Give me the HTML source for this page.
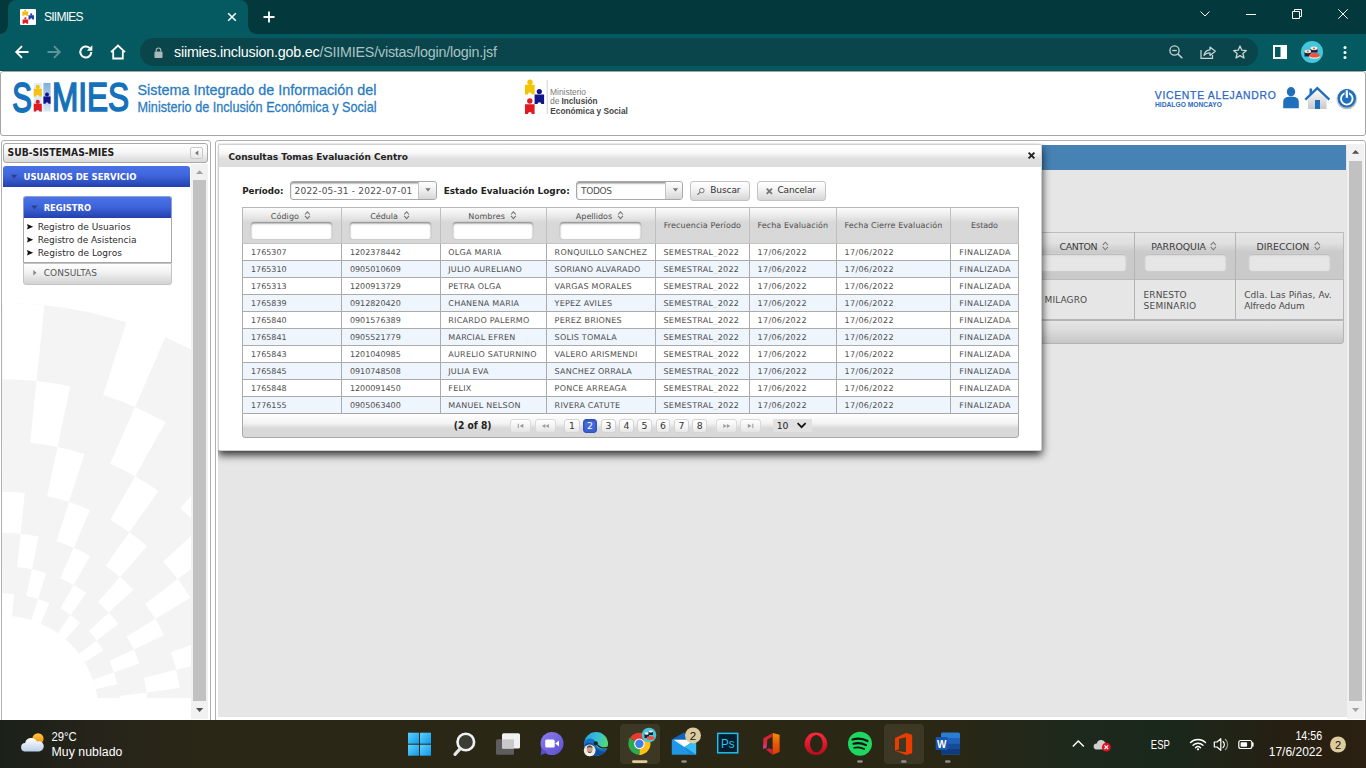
<!DOCTYPE html>
<html lang="es">
<head>
<meta charset="utf-8">
<title>SIIMIES</title>
<style>
*{box-sizing:border-box;margin:0;padding:0}
html,body{width:1366px;height:768px;overflow:hidden;background:#fff}
body{position:relative;font-family:"DejaVu Sans","Liberation Sans",sans-serif;font-size:8px;color:#4f4f4f}
.abs{position:absolute}
svg{display:block;position:absolute;overflow:visible}
/* ---------- browser chrome ---------- */
#tabbar{left:0;top:0;width:1366px;height:34px;background:#03383d}
#tab{left:8px;top:0;width:240px;height:34px;background:#045a60;border-radius:8px 8px 0 0}
#tab:before,#tab:after{content:"";position:absolute;bottom:0;width:8px;height:8px;background:radial-gradient(circle at 0 0,rgba(0,0,0,0) 7.5px,#045a60 8px)}
#tab:before{left:-8px}
#tab:after{right:-8px;transform:scaleX(-1)}
#toolbar{left:0;top:34px;width:1366px;height:37px;background:#045a60;border-bottom:1px solid #035056}
#omni{left:140px;top:38px;width:1118px;height:28px;border-radius:14px;background:#0a454b}
.ui{font-family:"Liberation Sans",sans-serif;color:#fff}
/* ---------- page ---------- */
#page{left:0;top:71px;width:1366px;height:649px;background:#fff}
#hdr{left:0;top:71px;width:1366px;height:65px;background:#fff;border:1px solid #a6a6a6;border-radius:3px}
/* ---------- taskbar ---------- */
#taskbar{left:0;top:720px;width:1366px;height:48px;background:linear-gradient(90deg,#1b2119 0%,#26231a 7%,#2b2716 15%,#2a2715 70%,#1c291c 79%,#1a281b 86%,#261f12 94%,#2b2012 100%)}

.sel{border:1px solid #a8a8a8;border-radius:3px;background:#fff;box-shadow:inset 0 1.500px 1.500px #959595}
.trg{border-left:1px solid #c4c4c4;border-radius:0 2px 2px 0;background:linear-gradient(#ffffff 0%,#f0f0f0 45%,#d6d6d6 100%)}
.btn{border:1px solid #c4c4c4;border-radius:3px;background:linear-gradient(#ffffff 0%,#f4f4f4 40%,#d6d6d6 100%)}
.fin{width:80.600px;height:17px;border-radius:3px;background:#fff;box-shadow:inset 0 1.5px 2px #8a8a8a,0 0 0 0.600px #c6c6c6}
.bin{height:17px;border-radius:3px;background:#e6e6e6;box-shadow:inset 0 1px 1.5px #b4b4b4,0 0 0 0.500px #cfcfcf}
.pb{border:1px solid #d4d4d4;border-radius:3px;background:linear-gradient(#ffffff 0%,#f7f7f7 50%,#e6e6e6 100%)}
.pbd{border:1px solid #dadada;border-radius:3px;background:linear-gradient(#ffffff 0%,#f3f3f3 50%,#e3e3e3 100%)}
.pba{border:1px solid #2f52b8;border-radius:3px;background:linear-gradient(#4a72e6 0%,#3a5fd2 100%);box-shadow:inset 0 1px 2px rgba(0,0,40,.35)}
</style>
</head>
<body>
<div class="abs" id="tabbar"></div>
<div class="abs" id="tab"></div>
<div class="abs" id="toolbar"></div>
<div class="abs" id="omni"></div>
<!-- favicon -->
<div class="abs" style="left:20px;top:9px;width:16px;height:16px;background:#fff;border-radius:1px"></div>
<svg style="left:20px;top:9px" width="16" height="16" viewBox="0 0 16 16">
 <g fill="#f7b916"><circle cx="5.300" cy="1.700" r="1.100"/><path d="M2.300 2.600h5.900v4.100h-1.900a1.050 1.050 0 0 0-2.100 0h-1.900z"/></g>
 <g fill="#1f3fa6"><circle cx="11.200" cy="5.300" r="1.100"/><path d="M8.500 6.200h5.500v4.200h-1.700a1.050 1.050 0 0 0-2.100 0h-1.700z"/></g>
 <g fill="#e21b23"><circle cx="5.400" cy="9.400" r="1.100"/><path d="M2.600 10.400h5.600v4.300h-1.750a1.050 1.050 0 0 0-2.100 0h-1.750z"/></g>
</svg>
<div class="abs ui" style="left:44px;top:10px;font-size:12px;line-height:14px;letter-spacing:-0.75px">SIIMIES</div>
<svg style="left:227px;top:12px" width="10" height="10" viewBox="0 0 10 10"><path d="M1.200 1.200L8.800 8.800M8.800 1.200L1.200 8.800" stroke="#fff" stroke-width="1.500" fill="none"/></svg>
<svg style="left:263px;top:11px" width="12" height="12" viewBox="0 0 12 12"><path d="M6 0.500V11.500M0.500 6H11.500" stroke="#fff" stroke-width="1.800" fill="none"/></svg>
<!-- window controls -->
<svg style="left:1200px;top:10px" width="10" height="8" viewBox="0 0 10 8"><path d="M0.500 1.500L5 6L9.500 1.500" stroke="#fff" stroke-width="1" fill="none"/></svg>
<svg style="left:1246px;top:14px" width="10" height="1" viewBox="0 0 10 1"><rect width="10" height="1" fill="#fff"/></svg>
<svg style="left:1292px;top:9px" width="10" height="10" viewBox="0 0 10 10"><path d="M0.500 2.500h7v7h-7zM2.500 2.500V0.500h7v7H7.500" stroke="#fff" stroke-width="1" fill="none"/></svg>
<svg style="left:1338px;top:9px" width="10" height="10" viewBox="0 0 10 10"><path d="M0.300 0.300L9.700 9.700M9.700 0.300L0.300 9.700" stroke="#fff" stroke-width="1" fill="none"/></svg>
<!-- nav buttons -->
<svg style="left:15px;top:45px" width="14" height="14" viewBox="0 0 14 14"><path d="M13.500 7H1.500M7 1.200L1.200 7L7 12.800" stroke="#fff" stroke-width="1.800" fill="none"/></svg>
<svg style="left:47px;top:45px" width="14" height="14" viewBox="0 0 14 14"><path d="M0.500 7H12.500M7 1.200L12.800 7L7 12.800" stroke="#5f9499" stroke-width="1.800" fill="none"/></svg>
<svg style="left:79px;top:45px" width="14" height="14" viewBox="0 0 14 14"><path d="M12.300 7A5.500 5.500 0 1 1 10.600 3" stroke="#fff" stroke-width="2" fill="none"/><path d="M13.300 0.300V5.700H7.900z" fill="#fff"/></svg>
<svg style="left:110px;top:44px" width="16" height="16" viewBox="0 0 16 16"><path d="M1 8.200L8 1.500L15 8.200M3.200 7V14.500H12.800V7" stroke="#fff" stroke-width="1.800" fill="none" stroke-linejoin="miter"/></svg>
<!-- lock -->
<svg style="left:153.500px;top:46.500px" width="9" height="11" viewBox="0 0 10 12"><rect x="0.500" y="5" width="9" height="7" rx="1" fill="#a9b8b9"/><path d="M2.500 5V3.500a2.500 2.500 0 0 1 5 0V5" stroke="#a9b8b9" stroke-width="1.300" fill="none"/></svg>
<div class="abs ui" style="left:174px;top:43px;font-size:14.300px;line-height:18px;white-space:nowrap;letter-spacing:-0.2px">siimies.inclusion.gob.ec<span style="color:#a9c3c5">/SIIMIES/vistas/login/login.jsf</span></div>
<!-- right omnibox icons -->
<svg style="left:1169px;top:45px" width="14" height="14" viewBox="0 0 14 14"><circle cx="5.500" cy="5.500" r="4.600" stroke="#c9d6d7" stroke-width="1.300" fill="none"/><path d="M9 9L13.300 13.300" stroke="#c9d6d7" stroke-width="1.600"/><path d="M3.200 5.500H7.800" stroke="#c9d6d7" stroke-width="1.300"/></svg>
<svg style="left:1200px;top:45px" width="16" height="14" viewBox="0 0 16 14"><path d="M1 5V13.400H12.500V10" stroke="#c9d6d7" stroke-width="1.200" fill="none"/><path d="M4 10.500C4.500 6.800 7 5 10 4.800V2L15.300 6.300L10 10.500V7.800C7.500 7.800 5.500 8.500 4 10.500z" stroke="#c9d6d7" stroke-width="1.200" fill="none" stroke-linejoin="round"/></svg>
<svg style="left:1233px;top:45px" width="14" height="14" viewBox="0 0 14 14"><path d="M7 1L8.800 5.200L13.400 5.600L9.900 8.600L11 13L7 10.600L3 13L4.100 8.600L0.600 5.600L5.200 5.200z" stroke="#c9d6d7" stroke-width="1.300" fill="none" stroke-linejoin="round"/></svg>
<svg style="left:1273px;top:45px" width="14" height="14" viewBox="0 0 14 14"><rect x="0" y="0" width="14" height="14" fill="#fff"/><rect x="2" y="2" width="5.500" height="10" fill="#045a60"/></svg>
<svg style="left:1301px;top:41px" width="22" height="22" viewBox="0 0 22 22"><circle cx="11" cy="11" r="11" fill="#45c6da"/><ellipse cx="13" cy="7.500" rx="3.500" ry="2" fill="#f4efe6"/><path d="M9.500 7.500v4h7v-4z" fill="#1a1f3a"/><ellipse cx="13" cy="7.500" rx="3.300" ry="1.700" fill="#f4efe6"/><circle cx="13" cy="7.500" r="1" fill="#e8503a"/><path d="M3.500 10.500v5h6.500v-5z" fill="#1a1f3a"/><ellipse cx="6.800" cy="10.500" rx="3.300" ry="1.700" fill="#f4efe6"/><circle cx="6.800" cy="10.500" r="1" fill="#e8503a"/><ellipse cx="13.500" cy="15.500" rx="5.200" ry="2.200" fill="#f4efe6"/><ellipse cx="13.500" cy="14.300" rx="5.200" ry="2.300" fill="#f0523f"/></svg>
<svg style="left:1343px;top:46px" width="4" height="13" viewBox="0 0 4 13"><circle cx="2" cy="1.500" r="1.500" fill="#fff"/><circle cx="2" cy="6.500" r="1.500" fill="#fff"/><circle cx="2" cy="11.500" r="1.500" fill="#fff"/></svg>
<!--CHROME-END-->
<div class="abs" id="page"></div>
<div class="abs" id="hdr"></div>
<!-- SIIMIES logo -->
<svg style="left:0;top:71px" width="400" height="64" viewBox="0 71 400 64" font-family="Liberation Sans, sans-serif">
 <text x="12.2" y="112" font-size="42" fill="#1571ba" stroke="#1571ba" stroke-width="1.8" textLength="19.6" lengthAdjust="spacingAndGlyphs">S</text>
 <text x="34" y="111" font-size="38" fill="#dbe9f6" font-weight="bold" textLength="16" lengthAdjust="spacingAndGlyphs">II</text>
 <defs><linearGradient id="c1" x1="0" y1="0" x2="0" y2="1"><stop offset="0" stop-color="#e4eff9"/><stop offset="1" stop-color="#d3e5f4"/></linearGradient><linearGradient id="c2" x1="0" y1="0" x2="0" y2="1"><stop offset="0" stop-color="#7fb0da"/><stop offset="1" stop-color="#dbe9f6"/></linearGradient></defs>
 <rect x="33.750" y="82.900" width="8.050" height="28.700" fill="url(#c1)"/>
 <rect x="43.400" y="82.900" width="7.200" height="28.700" fill="url(#c2)"/>
 <text x="51.9" y="111" font-size="40" fill="#1571ba" stroke="#1571ba" stroke-width="1.6" textLength="77.2" lengthAdjust="spacingAndGlyphs">MIES</text>
 <g fill="#f5c211"><circle cx="37.75" cy="86.9" r="2.1"/><path d="M33.75 88.7H41.8V96.4H39.45A1.7 1.7 0 0 0 36.05 96.4H33.75z"/></g>
 <g fill="#14148c"><circle cx="47.0" cy="94.4" r="2.0"/><path d="M43.4 96.4H50.6V103.7H48.50A1.5 1.5 0 0 0 45.50 103.7H43.4z"/></g>
 <g fill="#e01b22"><circle cx="37.75" cy="101.9" r="2.1"/><path d="M33.75 103.8H41.8V111.6H39.45A1.7 1.7 0 0 0 36.05 111.6H33.75z"/></g>
 <text x="137.500" y="95" font-size="15.500" fill="#2a7cc0" stroke="#2a7cc0" stroke-width="0.3" textLength="239" lengthAdjust="spacingAndGlyphs">Sistema Integrado de Información del</text>
 <text x="137.500" y="112" font-size="15.500" fill="#2a7cc0" stroke="#2a7cc0" stroke-width="0.3" textLength="239" lengthAdjust="spacingAndGlyphs">Ministerio de Inclusión Económica y Social</text>
</svg>
<!-- Ministerio logo -->
<svg style="left:520px;top:76px" width="120" height="44" viewBox="520 76 120 44" font-family="Liberation Sans, sans-serif">
 <g fill="#f5c400"><circle cx="530" cy="82.300" r="2.700"/><path d="M525 84.800h9.600v9.700h-2.800a1.900 1.900 0 0 0-3.800 0H525z"/></g>
 <g fill="#14148c"><circle cx="539.300" cy="91.500" r="2.600"/><path d="M534.600 94.600h9.500v9.500h-2.800a1.900 1.900 0 0 0-3.800 0h-2.900z"/></g>
 <g fill="#e01b22"><circle cx="529.800" cy="101" r="2.700"/><path d="M525 104.300h9.600v9.700h-2.800a1.900 1.900 0 0 0-3.800 0H525z"/></g>
 <rect x="546.800" y="80" width="0.700" height="34" fill="#bdbdbd"/>
 <text x="550" y="94.700" font-size="9" fill="#7a7a7a" textLength="36" lengthAdjust="spacingAndGlyphs">Ministerio</text>
 <text x="550" y="104" font-size="9" fill="#7a7a7a" textLength="9.500" lengthAdjust="spacingAndGlyphs">de</text>
 <text x="561.500" y="104" font-size="9" fill="#444" font-weight="bold" textLength="36" lengthAdjust="spacingAndGlyphs">Inclusión</text>
 <text x="550.300" y="113.700" font-size="9" fill="#444" font-weight="bold" textLength="77.500" lengthAdjust="spacingAndGlyphs">Económica y Social</text>
</svg>
<!-- user -->
<svg style="left:1140px;top:76px" width="226" height="46" viewBox="1140 76 226 46" font-family="Liberation Sans, sans-serif">
 <text x="1154.800" y="98.700" font-size="10.400" fill="#2b68c0" stroke="#2b68c0" stroke-width="0.250" textLength="121" lengthAdjust="spacing">VICENTE ALEJANDRO</text>
 <text x="1155" y="106.800" font-size="6.500" font-weight="bold" fill="#2b68c0" textLength="67" lengthAdjust="spacingAndGlyphs">HIDALGO MONCAYO</text>
 <!-- person -->
 <g fill="#1f6fbd"><ellipse cx="1291" cy="91.800" rx="4.200" ry="4.700"/><path d="M1283.200 108.300v-6.300c0-3 2.200-5 5-5.200h5.600c2.800 0.200 5 2.200 5 5.200v6.300z"/></g>
 <!-- home -->
 <defs><linearGradient id="hg" x1="0" y1="0" x2="0" y2="1"><stop offset="0" stop-color="#ffffff"/><stop offset="1" stop-color="#c8c8c8"/></linearGradient></defs>
 <path d="M1308 98l9.300-8.500 9.300 8.500v11h-18.600z" fill="url(#hg)"/>
 <rect x="1309.500" y="88.500" width="2.600" height="6" fill="#1f6fbd"/>
 <path d="M1305.300 99.600L1317.300 88.200L1329.400 99.600" stroke="#1f6fbd" stroke-width="2.300" fill="none" stroke-linejoin="miter"/>
 <rect x="1315" y="100" width="5" height="9" fill="#1f6fbd"/>
 <!-- power -->
 <defs><linearGradient id="pg" x1="0" y1="0" x2="0" y2="1"><stop offset="0" stop-color="#f4f4f4"/><stop offset="1" stop-color="#b8b8b8"/></linearGradient></defs>
 <circle cx="1346.800" cy="98.800" r="10.500" fill="url(#pg)"/>
 <circle cx="1346.800" cy="98.300" r="9.300" fill="#1f6fbd"/>
 <circle cx="1346.800" cy="98.800" r="5.800" fill="none" stroke="#fff" stroke-width="1.900"/>
 <rect x="1344.600" y="89.500" width="4.400" height="8.500" fill="#1f6fbd"/>
 <rect x="1345.700" y="90.300" width="2.200" height="7.500" fill="#fff"/>
</svg>
<!--HEADER-END-->
<div class="abs" style="left:1px;top:140px;width:210px;height:600px;border:1px solid #b0b0b0;border-radius:3px;background:#fff"></div>
<svg style="left:2px;top:290px;overflow:hidden" width="189" height="408" viewBox="2 290 189 408">
<g>
<path fill="#f4f4f4" d="M-3.1 615.6L-19.4 303.6A409 409 0 0 1 410.4 733.4L98.4 717.1A96.6 96.6 0 0 0 -3.1 615.6z"/>
<path fill="#fff" d="M2.5 379.2L2.6 303.0A409.0 409.0 0 0 1 44.4 305.2L36.5 381.0A332.8 332.8 0 0 0 2.5 379.2zM103.1 394.9L126.3 322.3A409.0 409.0 0 0 1 165.5 337.1L135.0 406.9A332.8 332.8 0 0 0 103.1 394.9zM194.3 440.4L238.3 378.2A409.0 409.0 0 0 1 271.2 404.1L221.1 461.5A332.8 332.8 0 0 0 194.3 440.4zM267.5 511.3L328.3 465.3A409.0 409.0 0 0 1 351.8 500.0L286.6 539.5A332.8 332.8 0 0 0 267.5 511.3zM315.7 601.0L387.6 575.6A409.0 409.0 0 0 1 399.5 615.8L325.4 633.7A332.8 332.8 0 0 0 315.7 601.0zM334.6 701.1L410.8 698.7A409.0 409.0 0 0 1 410.0 740.5L334.0 735.2A332.8 332.8 0 0 0 334.6 701.1zM30.1 442.7L36.5 381.0A332.8 332.8 0 0 1 70.2 386.3L57.5 447.0A270.8 270.8 0 0 0 30.1 442.7zM110.2 463.8L135.0 406.9A332.8 332.8 0 0 1 165.5 422.2L135.1 476.2A270.8 270.8 0 0 0 110.2 463.8zM180.3 508.2L221.1 461.5A332.8 332.8 0 0 1 245.5 485.2L200.2 527.5A270.8 270.8 0 0 0 180.3 508.2zM233.6 571.6L286.6 539.5A332.8 332.8 0 0 1 302.7 569.5L246.7 596.1A270.8 270.8 0 0 0 233.6 571.6zM265.2 648.3L325.4 633.7A332.8 332.8 0 0 1 331.8 667.2L270.3 675.5A270.8 270.8 0 0 0 265.2 648.3zM-20.2 492.8L-25.3 442.6A270.8 270.8 0 0 1 2.4 441.2L2.3 491.7A220.3 220.3 0 0 0 -20.2 492.8zM47.1 496.3L57.5 447.0A270.8 270.8 0 0 1 84.3 454.0L69.0 502.1A220.3 220.3 0 0 0 47.1 496.3zM110.3 520.1L135.1 476.2A270.8 270.8 0 0 1 158.5 491.0L129.3 532.2A220.3 220.3 0 0 0 110.3 520.1zM163.2 561.8L200.2 527.5A270.8 270.8 0 0 1 218.0 548.7L177.8 579.1A220.3 220.3 0 0 0 163.2 561.8zM201.1 617.7L246.7 596.1A270.8 270.8 0 0 1 257.3 621.7L209.7 638.5A220.3 220.3 0 0 0 201.1 617.7zM220.3 682.3L270.3 675.5A270.8 270.8 0 0 1 272.6 703.2L222.2 704.8A220.3 220.3 0 0 0 220.3 682.3zM2.3 532.7L2.3 491.7A220.3 220.3 0 0 1 24.8 492.9L20.6 533.7A179.3 179.3 0 0 0 2.3 532.7zM56.5 541.2L69.0 502.1A220.3 220.3 0 0 1 90.1 510.0L73.7 547.7A179.3 179.3 0 0 0 56.5 541.2zM105.6 565.7L129.3 532.2A220.3 220.3 0 0 1 147.0 546.1L120.0 577.1A179.3 179.3 0 0 0 105.6 565.7zM145.0 603.9L177.8 579.1A220.3 220.3 0 0 1 190.4 597.8L155.3 619.1A179.3 179.3 0 0 0 145.0 603.9zM171.0 652.2L209.7 638.5A220.3 220.3 0 0 1 216.1 660.2L176.2 669.8A179.3 179.3 0 0 0 171.0 652.2zM181.2 706.1L222.2 704.8A220.3 220.3 0 0 1 221.8 727.4L180.8 724.5A179.3 179.3 0 0 0 181.2 706.1zM17.1 566.9L20.6 533.7A179.3 179.3 0 0 1 38.7 536.5L31.9 569.2A145.9 145.9 0 0 0 17.1 566.9zM60.3 578.3L73.7 547.7A179.3 179.3 0 0 1 90.1 555.9L73.7 585.0A145.9 145.9 0 0 0 60.3 578.3zM98.0 602.2L120.0 577.1A179.3 179.3 0 0 1 133.2 589.8L108.8 612.6A145.9 145.9 0 0 0 98.0 602.2zM126.7 636.4L155.3 619.1A179.3 179.3 0 0 1 164.0 635.2L133.8 649.5A145.9 145.9 0 0 0 126.7 636.4zM143.8 677.7L176.2 669.8A179.3 179.3 0 0 1 179.6 687.9L146.5 692.4A145.9 145.9 0 0 0 143.8 677.7zM-10.0 593.9L-12.7 566.9A145.9 145.9 0 0 1 2.2 566.1L2.2 593.3A118.7 118.7 0 0 0 -10.0 593.9zM26.3 595.8L31.9 569.2A145.9 145.9 0 0 1 46.3 573.0L38.1 598.9A118.7 118.7 0 0 0 26.3 595.8zM60.3 608.6L73.7 585.0A145.9 145.9 0 0 1 86.3 593.0L70.6 615.1A118.7 118.7 0 0 0 60.3 608.6zM88.9 631.1L108.8 612.6A145.9 145.9 0 0 1 118.4 624.0L96.7 640.4A118.7 118.7 0 0 0 88.9 631.1zM109.3 661.2L133.8 649.5A145.9 145.9 0 0 1 139.5 663.4L113.9 672.4A118.7 118.7 0 0 0 109.3 661.2zM119.6 696.0L146.5 692.4A145.9 145.9 0 0 1 147.8 707.2L120.6 708.1A118.7 118.7 0 0 0 119.6 696.0zM2.1 615.4L2.2 593.3A118.7 118.7 0 0 1 14.3 593.9L12.0 615.9A96.6 96.6 0 0 0 2.1 615.4zM31.3 620.0L38.1 598.9A118.7 118.7 0 0 1 49.4 603.2L40.6 623.5A96.6 96.6 0 0 0 31.3 620.0zM57.8 633.2L70.6 615.1A118.7 118.7 0 0 1 80.1 622.7L65.6 639.3A96.6 96.6 0 0 0 57.8 633.2zM79.0 653.8L96.7 640.4A118.7 118.7 0 0 1 103.5 650.5L84.6 661.9A96.6 96.6 0 0 0 79.0 653.8zM93.0 679.8L113.9 672.4A118.7 118.7 0 0 1 117.4 684.1L95.9 689.3A96.6 96.6 0 0 0 93.0 679.8zM98.5 708.8L120.6 708.1A118.7 118.7 0 0 1 120.4 720.3L98.3 718.7A96.6 96.6 0 0 0 98.5 708.8z"/>
</g></svg>
<div class="abs" style="left:3px;top:143px;width:205px;height:20px;border:1px solid #a8a8a8;border-radius:3px;background:linear-gradient(#ffffff 0%,#f6f6f6 45%,#d9d9d9 100%)"></div>
<div class="abs" style="left:190px;top:147px;width:13px;height:12px;border:1px solid #c8c8c8;border-radius:2px;background:linear-gradient(#ffffff,#e6e6e6)"></div>
<div class="abs" style="left:3px;top:166px;width:187px;height:21px;border-radius:3px 3px 0 0;background:linear-gradient(#4a72e6 0%,#3f65dc 45%,#2341ad 100%)"></div>
<div class="abs" style="left:191px;top:163.500px;width:17px;height:555.500px;background:#f1f1f1"></div>
<div class="abs" style="left:193px;top:180px;width:13px;height:521px;background:#c1c1c1"></div>
<div class="abs" style="left:23px;top:196px;width:148.700px;height:22px;border:1px solid #8f9fd0;border-bottom:none;border-radius:3px 3px 0 0;background:linear-gradient(#4a72e6 0%,#3f65dc 45%,#2341ad 100%)"></div>
<div class="abs" style="left:23px;top:218px;width:148.700px;height:45px;border:1px solid #a8a8a8;border-top:none;background:#fff"></div>
<div class="abs" style="left:23px;top:262.500px;width:148.700px;height:22px;border:1px solid #c4c4c4;border-radius:0 0 3px 3px;background:linear-gradient(#ffffff 0%,#f2f2f2 40%,#d2d2d2 100%)"></div>
<svg style="left:0;top:136px" width="214" height="584" viewBox="0 136 214 584" font-family="DejaVu Sans, sans-serif">
<text x="7.5" y="155.9" font-size="9.6" fill="#222" font-weight="bold" textLength="106.7" lengthAdjust="spacingAndGlyphs">SUB-SISTEMAS-MIES</text>
<path d="M198.300 150.500v5l-3.300-2.500z" fill="#777"/>
<text x="23.5" y="179.8" font-size="9.5" fill="#fff" font-weight="bold" textLength="113" lengthAdjust="spacingAndGlyphs">USUARIOS DE SERVICIO</text>
<path d="M10.900 174.800h6.400l-3.200 3.800z" fill="#2c3e84"/>
<text x="43.7" y="210.7" font-size="9.5" fill="#fff" font-weight="bold" textLength="47.3" lengthAdjust="spacingAndGlyphs">REGISTRO</text>
<path d="M31.200 205.500h6.400l-3.200 3.800z" fill="#2c3e84"/>
<text x="37.7" y="229.8" font-size="9" fill="#2b2b2b" textLength="92.9" lengthAdjust="spacing">Registro de Usuarios</text>
<path d="M27 224l6.200 2.700-6.200 2.700 0.800-2.700z" fill="#111"/>
<text x="37.7" y="242.85" font-size="9" fill="#2b2b2b" textLength="98.7" lengthAdjust="spacing">Registro de Asistencia</text>
<path d="M27 237.05l6.200 2.700-6.200 2.700 0.800-2.700z" fill="#111"/>
<text x="37.7" y="255.9" font-size="9" fill="#2b2b2b" textLength="84.2" lengthAdjust="spacing">Registro de Logros</text>
<path d="M27 250.1l6.200 2.700-6.200 2.700 0.800-2.700z" fill="#111"/>
<text x="43.7" y="275.7" font-size="9" fill="#555" textLength="53.3" lengthAdjust="spacing">CONSULTAS</text>
<path d="M33.300 270v5.400l3.200-2.700z" fill="#888"/>
<path d="M196 174h7.200l-3.600-3.800z" fill="#a3a3a3"/>
<path d="M196 708h7.200l-3.600 4z" fill="#505050"/>
</svg>

<div class="abs" style="left:215px;top:140px;width:1151px;height:600px;border:1px solid #b0b0b0;border-radius:3px;background:#fff"></div>
<div class="abs" style="left:218px;top:144.500px;width:1129px;height:572.500px;background:#e6e6e6"></div>
<div class="abs" style="left:218px;top:144.800px;width:1128px;height:25px;background:#4682b4"></div>
<div class="abs" style="left:1347px;top:143.500px;width:17px;height:575.500px;background:#f1f1f1"></div>
<div class="abs" style="left:1349px;top:161px;width:13px;height:540px;background:#c1c1c1"></div>
<!-- background datatable -->
<div class="abs" style="left:900px;top:231.500px;width:444px;height:48px;border:1px solid #bcbcbc;background:linear-gradient(#e6e6e6 0%,#e0e0e0 22%,#cbcbcb 40%,#c9c9c9 100%)"></div>
<div class="abs" style="left:1134px;top:232px;width:1px;height:87px;background:#b4b4b4"></div>
<div class="abs" style="left:1235px;top:232px;width:1px;height:87px;background:#b4b4b4"></div>
<div class="abs" style="left:900px;top:279.500px;width:444px;height:40px;border:1px solid #b4b4b4;border-top:none;background:#e6e6e6"></div>
<div class="abs" style="left:1134px;top:232px;width:1px;height:87px;background:#b4b4b4"></div>
<div class="abs" style="left:1235px;top:232px;width:1px;height:87px;background:#b4b4b4"></div>
<div class="abs" style="left:900px;top:320px;width:444px;height:23.500px;border:1px solid #b4b4b4;border-radius:0 0 3px 3px;background:linear-gradient(#e6e6e6 0%,#dcdcdc 40%,#c6c6c6 100%)"></div>
<div class="abs bin" style="left:1040px;top:253.500px;width:86px"></div>
<div class="abs bin" style="left:1145px;top:253.500px;width:81px"></div>
<div class="abs bin" style="left:1249px;top:253.500px;width:81px"></div>
<svg style="left:1040px;top:140px" width="326" height="580" viewBox="1040 140 326 580" font-family="DejaVu Sans, sans-serif">
<text x="1059.6" y="250" font-size="9.4" fill="#3a3a3a" textLength="37.8" lengthAdjust="spacing">CANTON</text>
<text x="1151.3" y="250" font-size="9.4" fill="#3a3a3a" textLength="54.7" lengthAdjust="spacing">PARROQUIA</text>
<text x="1256.5" y="250" font-size="9.4" fill="#3a3a3a" textLength="52.8" lengthAdjust="spacing">DIRECCION</text>
<path d="M1102.7 245.100l2.600-2.900 2.600 2.900M1102.7 246.900l2.600 2.900 2.600-2.900" stroke="#7a7a7a" stroke-width="1.100" fill="none"/>
<path d="M1210.7 245.100l2.600-2.900 2.600 2.900M1210.7 246.900l2.600 2.900 2.600-2.900" stroke="#7a7a7a" stroke-width="1.100" fill="none"/>
<path d="M1314.7 245.100l2.600-2.900 2.600 2.900M1314.7 246.900l2.600 2.900 2.600-2.900" stroke="#7a7a7a" stroke-width="1.100" fill="none"/>
<text x="1044.6" y="302.7" font-size="9" fill="#4a4a4a" textLength="42.5" lengthAdjust="spacing">MILAGRO</text>
<text x="1143.6" y="298" font-size="9" fill="#4a4a4a" textLength="43" lengthAdjust="spacing">ERNESTO</text>
<text x="1143.6" y="308.7" font-size="9" fill="#4a4a4a" textLength="52.5" lengthAdjust="spacing">SEMINARIO</text>
<text x="1244.2" y="298" font-size="9" fill="#4a4a4a" textLength="87.5" lengthAdjust="spacing">Cdla. Las Piñas, Av.</text>
<text x="1244.2" y="308.7" font-size="9" fill="#4a4a4a" textLength="60.5" lengthAdjust="spacing">Alfredo Adum</text>
<path d="M1352 153.800h7.200l-3.600-3.900z" fill="#505050"/>
<path d="M1352 708h7.200l-3.600 4z" fill="#a3a3a3"/>
</svg>

<div class="abs" style="left:218.300px;top:144.300px;width:824.200px;height:307px;background:#fff;border:1px solid #d0d0d0;border-radius:2px;box-shadow:0 4px 8px rgba(0,0,0,.8);clip-path:inset(-1px -20px -20px -0.5px)"></div>
<div class="abs" style="left:219.300px;top:145.300px;width:822.200px;height:21.400px;background:linear-gradient(#ffffff 0%,#f8f8f8 35%,#e0e0e0 62%,#dcdcdc 100%)"></div>
<!-- selects -->
<div class="abs sel" style="left:290.200px;top:181.400px;width:146.400px;height:18.200px"></div>
<div class="abs trg" style="left:417.600px;top:182.400px;width:18px;height:16.200px"></div>
<div class="abs sel" style="left:576.200px;top:181.400px;width:107.300px;height:18.200px"></div>
<div class="abs trg" style="left:664.700px;top:182.400px;width:17.800px;height:16.200px"></div>
<div class="abs btn" style="left:690px;top:181.400px;width:59.800px;height:19.300px"></div>
<div class="abs btn" style="left:757.200px;top:181.400px;width:68.500px;height:19.300px"></div>
<div class="abs" style="left:242px;top:207px;width:777px;height:37px;background:linear-gradient(#fbfbfb 0%,#ececec 20%,#d8d8d8 40%,#d7d7d7 100%);border:1px solid #b8b8b8;border-bottom:none"></div>
<div class="abs" style="left:242px;top:243px;width:777px;height:17.2px;background:#ffffff;border-top:1px solid #c4c4c4"></div>
<div class="abs" style="left:242px;top:260px;width:777px;height:17.2px;background:#eef5fd;border-top:1px solid #ababab"></div>
<div class="abs" style="left:242px;top:277px;width:777px;height:17.2px;background:#ffffff;border-top:1px solid #ababab"></div>
<div class="abs" style="left:242px;top:294px;width:777px;height:17.2px;background:#eef5fd;border-top:1px solid #ababab"></div>
<div class="abs" style="left:242px;top:311px;width:777px;height:17.2px;background:#ffffff;border-top:1px solid #ababab"></div>
<div class="abs" style="left:242px;top:328px;width:777px;height:17.2px;background:#eef5fd;border-top:1px solid #ababab"></div>
<div class="abs" style="left:242px;top:345px;width:777px;height:17.2px;background:#ffffff;border-top:1px solid #ababab"></div>
<div class="abs" style="left:242px;top:362px;width:777px;height:17.2px;background:#eef5fd;border-top:1px solid #ababab"></div>
<div class="abs" style="left:242px;top:379px;width:777px;height:17.2px;background:#ffffff;border-top:1px solid #ababab"></div>
<div class="abs" style="left:242px;top:396px;width:777px;height:17.2px;background:#eef5fd;border-top:1px solid #ababab"></div>
<div class="abs" style="left:242px;top:413px;width:777px;height:24.600px;border:1px solid #a8a8a8;border-radius:0 0 3px 3px;background:linear-gradient(#ffffff 0%,#f3f3f3 40%,#d9d9d9 62%,#d8d8d8 100%)"></div>
<div class="abs" style="left:242px;top:244px;width:1px;height:169px;background:#ababab"></div>
<div class="abs" style="left:341px;top:244px;width:1px;height:169px;background:#ababab"></div>
<div class="abs" style="left:341px;top:208px;width:1px;height:36px;background:#c0c0c0"></div>
<div class="abs" style="left:440px;top:244px;width:1px;height:169px;background:#ababab"></div>
<div class="abs" style="left:440px;top:208px;width:1px;height:36px;background:#c0c0c0"></div>
<div class="abs" style="left:546px;top:244px;width:1px;height:169px;background:#ababab"></div>
<div class="abs" style="left:546px;top:208px;width:1px;height:36px;background:#c0c0c0"></div>
<div class="abs" style="left:655px;top:244px;width:1px;height:169px;background:#ababab"></div>
<div class="abs" style="left:655px;top:208px;width:1px;height:36px;background:#c0c0c0"></div>
<div class="abs" style="left:749px;top:244px;width:1px;height:169px;background:#ababab"></div>
<div class="abs" style="left:749px;top:208px;width:1px;height:36px;background:#c0c0c0"></div>
<div class="abs" style="left:836px;top:244px;width:1px;height:169px;background:#ababab"></div>
<div class="abs" style="left:836px;top:208px;width:1px;height:36px;background:#c0c0c0"></div>
<div class="abs" style="left:950px;top:244px;width:1px;height:169px;background:#ababab"></div>
<div class="abs" style="left:950px;top:208px;width:1px;height:36px;background:#c0c0c0"></div>
<div class="abs" style="left:1018px;top:244px;width:1px;height:169px;background:#ababab"></div>
<div class="abs fin" style="left:251.4px;top:222.300px"></div>
<div class="abs fin" style="left:350.4px;top:222.300px"></div>
<div class="abs fin" style="left:452.9px;top:222.300px"></div>
<div class="abs fin" style="left:560.4px;top:222.300px"></div>
<div class="abs pbd" style="left:509.7px;top:418.700px;width:21.7px;height:14.400px"></div>
<div class="abs pbd" style="left:534.5px;top:418.700px;width:21.8px;height:14.400px"></div>
<div class="abs pbd" style="left:715.5px;top:418.700px;width:21.7px;height:14.400px"></div>
<div class="abs pbd" style="left:739.8px;top:418.700px;width:21.4px;height:14.400px"></div>
<div class="abs pb" style="left:564.4px;top:418.700px;width:15.3px;height:14.400px"></div>
<div class="abs pba" style="left:582.8px;top:418.700px;width:14.4px;height:14.400px"></div>
<div class="abs pb" style="left:600.8px;top:418.700px;width:15.4px;height:14.400px"></div>
<div class="abs pb" style="left:618.8px;top:418.700px;width:15.2px;height:14.400px"></div>
<div class="abs pb" style="left:636.8px;top:418.700px;width:15.4px;height:14.400px"></div>
<div class="abs pb" style="left:655.5px;top:418.700px;width:14.7px;height:14.400px"></div>
<div class="abs pb" style="left:673.7px;top:418.700px;width:15.5px;height:14.400px"></div>
<div class="abs pb" style="left:692.2px;top:418.700px;width:15.1px;height:14.400px"></div>
<div class="abs" style="left:772.600px;top:419.400px;width:39.200px;height:12.200px;background:#e1e1e1;border-radius:1px"></div>
<svg style="left:215px;top:140px" width="840" height="320" viewBox="215 140 840 320" font-family="DejaVu Sans, sans-serif">
<text x="228.4" y="159.8" font-size="9.4" fill="#222" font-weight="bold" textLength="179.5" lengthAdjust="spacingAndGlyphs">Consultas Tomas Evaluación Centro</text>
<path d="M1028.600 152.600l5.800 5.800M1034.400 152.600l-5.800 5.800" stroke="#222" stroke-width="1.900" fill="none"/>
<text x="242.2" y="193.6" font-size="9.2" fill="#222" font-weight="bold" textLength="41.3" lengthAdjust="spacingAndGlyphs">Período:</text>
<text x="294.6" y="193.6" font-size="9" fill="#4f4f4f" textLength="117.7" lengthAdjust="spacing">2022-05-31 - 2022-07-01</text>
<path d="M425.300 188.300h5.400l-2.700 3.300z" fill="#777"/>
<text x="443.7" y="193.6" font-size="9.2" fill="#222" font-weight="bold" textLength="126" lengthAdjust="spacingAndGlyphs">Estado Evaluación Logro:</text>
<text x="581" y="193.6" font-size="9" fill="#4f4f4f" textLength="31" lengthAdjust="spacing">TODOS</text>
<path d="M672.800 188.300h5.400l-2.700 3.300z" fill="#777"/>
<circle cx="701.800" cy="190.600" r="2.300" stroke="#777" stroke-width="1" fill="none"/><path d="M700 192.400l-2.600 2.400" stroke="#777" stroke-width="1.200"/>
<text x="710.3" y="192.8" font-size="9" fill="#333" textLength="30.2" lengthAdjust="spacing">Buscar</text>
<path d="M766.700 188.600l5.300 5.300M772 188.600l-5.300 5.300" stroke="#777" stroke-width="1.800" fill="none"/>
<text x="777.4" y="192.8" font-size="9" fill="#333" textLength="38.6" lengthAdjust="spacing">Cancelar</text>
<text x="270.8" y="218.7" font-size="8" fill="#4f4f4f" textLength="28.2" lengthAdjust="spacing" text-rendering="geometricPrecision">Código</text>
<path d="M305 214.500l2.400-2.700 2.400 2.700M305 215.900l2.400 2.700 2.400-2.700" stroke="#737373" stroke-width="1.050" fill="none"/>
<text x="370.3" y="218.7" font-size="8" fill="#4f4f4f" textLength="27.6" lengthAdjust="spacing" text-rendering="geometricPrecision">Cédula</text>
<path d="M404.2 214.500l2.400-2.700 2.400 2.700M404.2 215.900l2.400 2.700 2.400-2.700" stroke="#737373" stroke-width="1.050" fill="none"/>
<text x="468.3" y="218.7" font-size="8" fill="#4f4f4f" textLength="36.7" lengthAdjust="spacing" text-rendering="geometricPrecision">Nombres</text>
<path d="M511 214.500l2.400-2.700 2.400 2.700M511 215.900l2.400 2.700 2.400-2.700" stroke="#737373" stroke-width="1.050" fill="none"/>
<text x="575.8" y="218.7" font-size="8" fill="#4f4f4f" textLength="36.4" lengthAdjust="spacing" text-rendering="geometricPrecision">Apellidos</text>
<path d="M618.1 214.500l2.400-2.700 2.400 2.700M618.1 215.900l2.400 2.700 2.400-2.700" stroke="#737373" stroke-width="1.050" fill="none"/>
<text x="663.7" y="228" font-size="8" fill="#4f4f4f" textLength="77.3" lengthAdjust="spacing" text-rendering="geometricPrecision">Frecuencia Período</text>
<text x="757.5" y="228" font-size="8" fill="#4f4f4f" textLength="70.5" lengthAdjust="spacing" text-rendering="geometricPrecision">Fecha Evaluación</text>
<text x="844.6" y="228" font-size="8" fill="#4f4f4f" textLength="97.8" lengthAdjust="spacing" text-rendering="geometricPrecision">Fecha Cierre Evaluación</text>
<text x="971" y="228" font-size="8" fill="#4f4f4f" textLength="27" lengthAdjust="spacing" text-rendering="geometricPrecision">Estado</text>
<text x="251" y="254.9" font-size="8" fill="#4f4f4f" text-rendering="geometricPrecision">1765307</text>
<text x="349.9" y="254.9" font-size="8" fill="#4f4f4f" text-rendering="geometricPrecision">1202378442</text>
<text x="448.3" y="254.9" font-size="8" fill="#4f4f4f" textLength="52.92" lengthAdjust="spacing" text-rendering="geometricPrecision">OLGA MARIA</text>
<text x="554.6" y="254.9" font-size="8" fill="#4f4f4f" textLength="92.45" lengthAdjust="spacing" text-rendering="geometricPrecision">RONQUILLO SANCHEZ</text>
<text x="663.5" y="254.9" font-size="8" fill="#4f4f4f" textLength="75.4" lengthAdjust="spacing" text-rendering="geometricPrecision">SEMESTRAL<tspan fill="#d2d2d2">_</tspan>2022</text>
<text x="757.6" y="254.9" font-size="8" fill="#4f4f4f" textLength="48.9" lengthAdjust="spacing" text-rendering="geometricPrecision">17/06/2022</text>
<text x="844.6" y="254.9" font-size="8" fill="#4f4f4f" textLength="48.9" lengthAdjust="spacing" text-rendering="geometricPrecision">17/06/2022</text>
<text x="959.3" y="254.9" font-size="8" fill="#4f4f4f" textLength="51.3" lengthAdjust="spacing" text-rendering="geometricPrecision">FINALIZADA</text>
<text x="251" y="271.9" font-size="8" fill="#4f4f4f" text-rendering="geometricPrecision">1765310</text>
<text x="349.9" y="271.9" font-size="8" fill="#4f4f4f" text-rendering="geometricPrecision">0905010609</text>
<text x="448.3" y="271.9" font-size="8" fill="#4f4f4f" textLength="73.41" lengthAdjust="spacing" text-rendering="geometricPrecision">JULIO AURELIANO</text>
<text x="554.6" y="271.9" font-size="8" fill="#4f4f4f" textLength="85.77" lengthAdjust="spacing" text-rendering="geometricPrecision">SORIANO ALVARADO</text>
<text x="663.5" y="271.9" font-size="8" fill="#4f4f4f" textLength="75.4" lengthAdjust="spacing" text-rendering="geometricPrecision">SEMESTRAL<tspan fill="#d2d2d2">_</tspan>2022</text>
<text x="757.6" y="271.9" font-size="8" fill="#4f4f4f" textLength="48.9" lengthAdjust="spacing" text-rendering="geometricPrecision">17/06/2022</text>
<text x="844.6" y="271.9" font-size="8" fill="#4f4f4f" textLength="48.9" lengthAdjust="spacing" text-rendering="geometricPrecision">17/06/2022</text>
<text x="959.3" y="271.9" font-size="8" fill="#4f4f4f" textLength="51.3" lengthAdjust="spacing" text-rendering="geometricPrecision">FINALIZADA</text>
<text x="251" y="288.9" font-size="8" fill="#4f4f4f" text-rendering="geometricPrecision">1765313</text>
<text x="349.9" y="288.9" font-size="8" fill="#4f4f4f" text-rendering="geometricPrecision">1200913729</text>
<text x="448.3" y="288.9" font-size="8" fill="#4f4f4f" textLength="52.61" lengthAdjust="spacing" text-rendering="geometricPrecision">PETRA OLGA</text>
<text x="554.6" y="288.9" font-size="8" fill="#4f4f4f" textLength="76.95" lengthAdjust="spacing" text-rendering="geometricPrecision">VARGAS MORALES</text>
<text x="663.5" y="288.9" font-size="8" fill="#4f4f4f" textLength="75.4" lengthAdjust="spacing" text-rendering="geometricPrecision">SEMESTRAL<tspan fill="#d2d2d2">_</tspan>2022</text>
<text x="757.6" y="288.9" font-size="8" fill="#4f4f4f" textLength="48.9" lengthAdjust="spacing" text-rendering="geometricPrecision">17/06/2022</text>
<text x="844.6" y="288.9" font-size="8" fill="#4f4f4f" textLength="48.9" lengthAdjust="spacing" text-rendering="geometricPrecision">17/06/2022</text>
<text x="959.3" y="288.9" font-size="8" fill="#4f4f4f" textLength="51.3" lengthAdjust="spacing" text-rendering="geometricPrecision">FINALIZADA</text>
<text x="251" y="305.9" font-size="8" fill="#4f4f4f" text-rendering="geometricPrecision">1765839</text>
<text x="349.9" y="305.9" font-size="8" fill="#4f4f4f" text-rendering="geometricPrecision">0912820420</text>
<text x="448.3" y="305.9" font-size="8" fill="#4f4f4f" textLength="70.8" lengthAdjust="spacing" text-rendering="geometricPrecision">CHANENA MARIA</text>
<text x="554.6" y="305.9" font-size="8" fill="#4f4f4f" textLength="57.6" lengthAdjust="spacing" text-rendering="geometricPrecision">YEPEZ AVILES</text>
<text x="663.5" y="305.9" font-size="8" fill="#4f4f4f" textLength="75.4" lengthAdjust="spacing" text-rendering="geometricPrecision">SEMESTRAL<tspan fill="#d2d2d2">_</tspan>2022</text>
<text x="757.6" y="305.9" font-size="8" fill="#4f4f4f" textLength="48.9" lengthAdjust="spacing" text-rendering="geometricPrecision">17/06/2022</text>
<text x="844.6" y="305.9" font-size="8" fill="#4f4f4f" textLength="48.9" lengthAdjust="spacing" text-rendering="geometricPrecision">17/06/2022</text>
<text x="959.3" y="305.9" font-size="8" fill="#4f4f4f" textLength="51.3" lengthAdjust="spacing" text-rendering="geometricPrecision">FINALIZADA</text>
<text x="251" y="322.9" font-size="8" fill="#4f4f4f" text-rendering="geometricPrecision">1765840</text>
<text x="349.9" y="322.9" font-size="8" fill="#4f4f4f" text-rendering="geometricPrecision">0901576389</text>
<text x="448.3" y="322.9" font-size="8" fill="#4f4f4f" textLength="80.93" lengthAdjust="spacing" text-rendering="geometricPrecision">RICARDO PALERMO</text>
<text x="554.6" y="322.9" font-size="8" fill="#4f4f4f" textLength="67.1" lengthAdjust="spacing" text-rendering="geometricPrecision">PEREZ BRIONES</text>
<text x="663.5" y="322.9" font-size="8" fill="#4f4f4f" textLength="75.4" lengthAdjust="spacing" text-rendering="geometricPrecision">SEMESTRAL<tspan fill="#d2d2d2">_</tspan>2022</text>
<text x="757.6" y="322.9" font-size="8" fill="#4f4f4f" textLength="48.9" lengthAdjust="spacing" text-rendering="geometricPrecision">17/06/2022</text>
<text x="844.6" y="322.9" font-size="8" fill="#4f4f4f" textLength="48.9" lengthAdjust="spacing" text-rendering="geometricPrecision">17/06/2022</text>
<text x="959.3" y="322.9" font-size="8" fill="#4f4f4f" textLength="51.3" lengthAdjust="spacing" text-rendering="geometricPrecision">FINALIZADA</text>
<text x="251" y="339.9" font-size="8" fill="#4f4f4f" text-rendering="geometricPrecision">1765841</text>
<text x="349.9" y="339.9" font-size="8" fill="#4f4f4f" text-rendering="geometricPrecision">0905521779</text>
<text x="448.3" y="339.9" font-size="8" fill="#4f4f4f" textLength="66.97" lengthAdjust="spacing" text-rendering="geometricPrecision">MARCIAL EFREN</text>
<text x="554.6" y="339.9" font-size="8" fill="#4f4f4f" textLength="62.04" lengthAdjust="spacing" text-rendering="geometricPrecision">SOLIS TOMALA</text>
<text x="663.5" y="339.9" font-size="8" fill="#4f4f4f" textLength="75.4" lengthAdjust="spacing" text-rendering="geometricPrecision">SEMESTRAL<tspan fill="#d2d2d2">_</tspan>2022</text>
<text x="757.6" y="339.9" font-size="8" fill="#4f4f4f" textLength="48.9" lengthAdjust="spacing" text-rendering="geometricPrecision">17/06/2022</text>
<text x="844.6" y="339.9" font-size="8" fill="#4f4f4f" textLength="48.9" lengthAdjust="spacing" text-rendering="geometricPrecision">17/06/2022</text>
<text x="959.3" y="339.9" font-size="8" fill="#4f4f4f" textLength="51.3" lengthAdjust="spacing" text-rendering="geometricPrecision">FINALIZADA</text>
<text x="251" y="356.9" font-size="8" fill="#4f4f4f" text-rendering="geometricPrecision">1765843</text>
<text x="349.9" y="356.9" font-size="8" fill="#4f4f4f" text-rendering="geometricPrecision">1201040985</text>
<text x="448.3" y="356.9" font-size="8" fill="#4f4f4f" textLength="88.24" lengthAdjust="spacing" text-rendering="geometricPrecision">AURELIO SATURNINO</text>
<text x="554.6" y="356.9" font-size="8" fill="#4f4f4f" textLength="82.68" lengthAdjust="spacing" text-rendering="geometricPrecision">VALERO ARISMENDI</text>
<text x="663.5" y="356.9" font-size="8" fill="#4f4f4f" textLength="75.4" lengthAdjust="spacing" text-rendering="geometricPrecision">SEMESTRAL<tspan fill="#d2d2d2">_</tspan>2022</text>
<text x="757.6" y="356.9" font-size="8" fill="#4f4f4f" textLength="48.9" lengthAdjust="spacing" text-rendering="geometricPrecision">17/06/2022</text>
<text x="844.6" y="356.9" font-size="8" fill="#4f4f4f" textLength="48.9" lengthAdjust="spacing" text-rendering="geometricPrecision">17/06/2022</text>
<text x="959.3" y="356.9" font-size="8" fill="#4f4f4f" textLength="51.3" lengthAdjust="spacing" text-rendering="geometricPrecision">FINALIZADA</text>
<text x="251" y="373.9" font-size="8" fill="#4f4f4f" text-rendering="geometricPrecision">1765845</text>
<text x="349.9" y="373.9" font-size="8" fill="#4f4f4f" text-rendering="geometricPrecision">0910748508</text>
<text x="448.3" y="373.9" font-size="8" fill="#4f4f4f" textLength="40.19" lengthAdjust="spacing" text-rendering="geometricPrecision">JULIA EVA</text>
<text x="554.6" y="373.9" font-size="8" fill="#4f4f4f" textLength="77.22" lengthAdjust="spacing" text-rendering="geometricPrecision">SANCHEZ ORRALA</text>
<text x="663.5" y="373.9" font-size="8" fill="#4f4f4f" textLength="75.4" lengthAdjust="spacing" text-rendering="geometricPrecision">SEMESTRAL<tspan fill="#d2d2d2">_</tspan>2022</text>
<text x="757.6" y="373.9" font-size="8" fill="#4f4f4f" textLength="48.9" lengthAdjust="spacing" text-rendering="geometricPrecision">17/06/2022</text>
<text x="844.6" y="373.9" font-size="8" fill="#4f4f4f" textLength="48.9" lengthAdjust="spacing" text-rendering="geometricPrecision">17/06/2022</text>
<text x="959.3" y="373.9" font-size="8" fill="#4f4f4f" textLength="51.3" lengthAdjust="spacing" text-rendering="geometricPrecision">FINALIZADA</text>
<text x="251" y="390.9" font-size="8" fill="#4f4f4f" text-rendering="geometricPrecision">1765848</text>
<text x="349.9" y="390.9" font-size="8" fill="#4f4f4f" text-rendering="geometricPrecision">1200091450</text>
<text x="448.3" y="390.9" font-size="8" fill="#4f4f4f" textLength="22.9" lengthAdjust="spacing" text-rendering="geometricPrecision">FELIX</text>
<text x="554.6" y="390.9" font-size="8" fill="#4f4f4f" textLength="71.9" lengthAdjust="spacing" text-rendering="geometricPrecision">PONCE ARREAGA</text>
<text x="663.5" y="390.9" font-size="8" fill="#4f4f4f" textLength="75.4" lengthAdjust="spacing" text-rendering="geometricPrecision">SEMESTRAL<tspan fill="#d2d2d2">_</tspan>2022</text>
<text x="757.6" y="390.9" font-size="8" fill="#4f4f4f" textLength="48.9" lengthAdjust="spacing" text-rendering="geometricPrecision">17/06/2022</text>
<text x="844.6" y="390.9" font-size="8" fill="#4f4f4f" textLength="48.9" lengthAdjust="spacing" text-rendering="geometricPrecision">17/06/2022</text>
<text x="959.3" y="390.9" font-size="8" fill="#4f4f4f" textLength="51.3" lengthAdjust="spacing" text-rendering="geometricPrecision">FINALIZADA</text>
<text x="251" y="407.9" font-size="8" fill="#4f4f4f" text-rendering="geometricPrecision">1776155</text>
<text x="349.9" y="407.9" font-size="8" fill="#4f4f4f" text-rendering="geometricPrecision">0905063400</text>
<text x="448.3" y="407.9" font-size="8" fill="#4f4f4f" textLength="72.1" lengthAdjust="spacing" text-rendering="geometricPrecision">MANUEL NELSON</text>
<text x="554.6" y="407.9" font-size="8" fill="#4f4f4f" textLength="65.52" lengthAdjust="spacing" text-rendering="geometricPrecision">RIVERA CATUTE</text>
<text x="663.5" y="407.9" font-size="8" fill="#4f4f4f" textLength="75.4" lengthAdjust="spacing" text-rendering="geometricPrecision">SEMESTRAL<tspan fill="#d2d2d2">_</tspan>2022</text>
<text x="757.6" y="407.9" font-size="8" fill="#4f4f4f" textLength="48.9" lengthAdjust="spacing" text-rendering="geometricPrecision">17/06/2022</text>
<text x="844.6" y="407.9" font-size="8" fill="#4f4f4f" textLength="48.9" lengthAdjust="spacing" text-rendering="geometricPrecision">17/06/2022</text>
<text x="959.3" y="407.9" font-size="8" fill="#4f4f4f" textLength="51.3" lengthAdjust="spacing" text-rendering="geometricPrecision">FINALIZADA</text>
<text x="453.7" y="428.7" font-size="9.6" fill="#222" font-weight="bold" textLength="37.8" lengthAdjust="spacingAndGlyphs">(2 of 8)</text>
<g fill="#9a9a9a"><rect x="517.800" y="423.700" width="1" height="4.400"/><path d="M523.300 423.700v4.400l-3.700-2.200z"/><path d="M545.300 423.900v4l-3.300-2z"/><path d="M548.900 423.900v4l-3.300-2z"/><path d="M723.300 423.900v4l3.300-2z"/><path d="M726.900 423.900v4l3.300-2z" /><rect x="752.300" y="423.700" width="1" height="4.400"/><path d="M747.800 423.700v4.400l3.700-2.200z"/></g>
<text x="572.05" y="429.3" font-size="9.3" fill="#333" text-anchor="middle">1</text>
<text x="590" y="429.3" font-size="9.3" fill="#fff" text-anchor="middle">2</text>
<text x="608.5" y="429.3" font-size="9.3" fill="#333" text-anchor="middle">3</text>
<text x="626.4" y="429.3" font-size="9.3" fill="#333" text-anchor="middle">4</text>
<text x="644.5" y="429.3" font-size="9.3" fill="#333" text-anchor="middle">5</text>
<text x="662.85" y="429.3" font-size="9.3" fill="#333" text-anchor="middle">6</text>
<text x="681.45" y="429.3" font-size="9.3" fill="#333" text-anchor="middle">7</text>
<text x="699.75" y="429.3" font-size="9.3" fill="#333" text-anchor="middle">8</text>
<text x="776.7" y="429.2" font-size="9.3" fill="#222">10</text>
<path d="M797.600 423.200l4 4 4-4" stroke="#111" stroke-width="1.700" fill="none"/>
</svg>

<div class="abs" id="taskbar"></div>
<div class="abs" style="left:620px;top:724px;width:40px;height:40px;border-radius:4px;background:rgba(255,238,200,.085)"></div>
<div class="abs" style="left:884px;top:724px;width:40px;height:40px;border-radius:4px;background:rgba(255,238,200,.085)"></div>
<svg style="left:0;top:720px" width="1366" height="48" viewBox="0 720 1366 48" font-family="Liberation Sans, sans-serif">
<defs>
 <linearGradient id="wg" x1="0" y1="0" x2="1" y2="1"><stop offset="0" stop-color="#5fd0ff"/><stop offset="1" stop-color="#0f9ae6"/></linearGradient>
 <linearGradient id="cl" x1="0" y1="0" x2="0" y2="1"><stop offset="0" stop-color="#ffffff"/><stop offset="1" stop-color="#b9cfe8"/></linearGradient>
 <linearGradient id="su" x1="0" y1="0" x2="0" y2="1"><stop offset="0" stop-color="#ffc83a"/><stop offset="1" stop-color="#f08a10"/></linearGradient>
 <linearGradient id="ml" x1="0" y1="0" x2="0" y2="1"><stop offset="0" stop-color="#1b86dc"/><stop offset="1" stop-color="#33b4f2"/></linearGradient>
 <linearGradient id="ch" x1="0" y1="0" x2="1" y2="1"><stop offset="0" stop-color="#8f7cf0"/><stop offset="1" stop-color="#5a4fd0"/></linearGradient>
 <linearGradient id="ed" x1="0" y1="0.200" x2="1" y2="0.500"><stop offset="0" stop-color="#2a9fe2"/><stop offset="0.500" stop-color="#35bfd8"/><stop offset="1" stop-color="#5cdb62"/></linearGradient>
 <linearGradient id="of" x1="0" y1="0" x2="1" y2="1"><stop offset="0" stop-color="#f2501e"/><stop offset="1" stop-color="#c01a1a"/></linearGradient>
 <linearGradient id="op" x1="0" y1="0" x2="0" y2="1"><stop offset="0" stop-color="#ff2a3c"/><stop offset="1" stop-color="#b80a1e"/></linearGradient>
<linearGradient id="ofr" x1="0" y1="0" x2="0" y2="1"><stop offset="0" stop-color="#f39200"/><stop offset="0.450" stop-color="#ea5b0c"/><stop offset="1" stop-color="#dc3c00"/></linearGradient><linearGradient id="ofl" x1="0" y1="0" x2="0" y2="1"><stop offset="0" stop-color="#d81e1e"/><stop offset="0.550" stop-color="#d42a3c"/><stop offset="1" stop-color="#c440a8"/></linearGradient>
</defs>
<!-- weather -->
<circle cx="38" cy="738.800" r="5.600" fill="url(#su)"/>
<path d="M24.500 751.500a4.300 4.300 0 0 1 0.600-8.500a6.300 6.300 0 0 1 11.800-1.500a5 5 0 0 1 3.600 9.500a4 4 0 0 1-1.500 0.500z" fill="url(#cl)"/>
<text x="51.500" y="740.900" font-size="12" fill="#fff" textLength="25.200" lengthAdjust="spacingAndGlyphs">29°C</text>
<text x="51.500" y="756.400" font-size="12.300" fill="#fff" textLength="70.900" lengthAdjust="spacing">Muy nublado</text>
<!-- windows -->
<g fill="url(#wg)"><rect x="408" y="732.700" width="11" height="11"/><rect x="420" y="732.700" width="11" height="11"/><rect x="408" y="744.700" width="11" height="11"/><rect x="420" y="744.700" width="11" height="11"/></g>
<!-- search -->
<circle cx="465.800" cy="742" r="8.300" fill="#3b3d33" stroke="#f2f2f2" stroke-width="2.600"/>
<path d="M460.200 748.600l-5.200 5.800" stroke="#e8e8e8" stroke-width="3.200" stroke-linecap="round"/>
<!-- task view -->
<rect x="496" y="739.300" width="18" height="15.400" rx="1.500" fill="#5d5d5d"/>
<rect x="502" y="733.200" width="18" height="15.300" rx="1.500" fill="#f1f1f1"/>
<rect x="502" y="739.300" width="12" height="9.200" fill="#c9c9c9"/>
<!-- chat -->
<circle cx="552" cy="743.500" r="11.500" fill="url(#ch)"/>
<path d="M541.500 748l-0.800 7 6.800-2.600z" fill="#5a4fd0"/>
<rect x="545.200" y="739.500" width="9.500" height="8" rx="1.500" fill="#fff"/>
<path d="M555.200 743.500l3.800-3v6z" fill="#fff"/>
<!-- edge -->
<clipPath id="ec"><circle cx="596.100" cy="743.800" r="11.900"/></clipPath>
<g clip-path="url(#ec)">
<rect x="584" y="731" width="25" height="26" fill="url(#ed)"/>
<path d="M584 742.500C586.500 737.800 592.500 737.300 595 741.200C596.300 743.500 595.600 746 598.300 747.800C601.200 749.500 605.200 749 608.200 747.300V757H584z" fill="#1670c8"/>
<path d="M584 746C586 742 591 742 593.600 745C595.200 747.500 597.500 750.200 602 751.200C604.300 751.600 606.300 751.100 608 750V757H584z" fill="#0c4fa0"/>
</g>
<circle cx="595.800" cy="743.300" r="2.100" fill="#20231a"/>
<path d="M597.300 744.600C598.800 747.300 603 748.800 608 747.200" stroke="#20231a" stroke-width="1.300" fill="none"/>
<circle cx="589.700" cy="750.300" r="5.900" fill="#efe9e2"/>
<ellipse cx="589.700" cy="749.300" rx="2.900" ry="3.300" fill="#caa088"/>
<path d="M586.800 748.200c0.200-3.800 5.600-3.800 5.800 0c-1.500-1.300-4.300-1.300-5.800 0z" fill="#5b4e46"/>
<path d="M587.400 751.200c0.800 2.600 3.800 2.600 4.600 0c-1.300 0.900-3.300 0.900-4.600 0z" fill="#6d5446"/>
<path d="M585.300 754.300c1.200-1.800 7.600-1.800 8.800 0c-2.200 2.600-6.600 2.600-8.800 0z" fill="#f6f3ee"/>
<!-- chrome -->
<path d="M639.400 743.800L629.870 738.300A11 11 0 0 1 648.930 738.300z" fill="#e33b2e"/>
<path d="M639.400 743.800L648.930 738.300A11 11 0 0 1 639.400 754.800z" fill="#fbc116"/>
<path d="M639.400 743.800L639.400 754.800A11 11 0 0 1 629.870 738.300z" fill="#2da94f"/>
<path d="M639.400 738.500h10.300l-1-2.500h-9.300z" fill="#e33b2e"/>
<path d="M644 746.500l-5 8.300h2.500l4.800-7.300z" fill="#fbc116"/>
<path d="M634.800 746.500l-5.200-8.700-1 2.300 4.500 7.800z" fill="#2da94f"/>
<circle cx="639.400" cy="743.800" r="5.300" fill="#fff"/>
<circle cx="639.400" cy="743.800" r="4.200" fill="#3f7fe8"/>
<circle cx="649" cy="735" r="7.300" fill="#45c6da"/>
<path d="M644.500 733.500v4.500h4.500v-4.500z" fill="#1a1f3a"/><ellipse cx="646.800" cy="733.500" rx="2.300" ry="1.200" fill="#f4efe6"/>
<path d="M648.500 731.500v3.500h4.500v-3.500z" fill="#1a1f3a"/><ellipse cx="650.800" cy="731.500" rx="2.300" ry="1.100" fill="#f4efe6"/>
<ellipse cx="650.500" cy="738" rx="3.800" ry="1.900" fill="#f0523f"/>
<rect x="632" y="760.200" width="15.500" height="2.700" rx="1.350" fill="#e3cc8e"/>
<!-- mail -->
<path d="M671.800 739.600L683.900 732.600L696.100 739.600z" fill="#0f64c0"/>
<rect x="671.800" y="739.400" width="24.300" height="15.300" fill="#1f97e6"/>
<path d="M673.800 739.800H695L684.600 747z" fill="#fff"/>
<path d="M673.800 739.800L679 741L684.600 747z" fill="#e4e9ee"/>
<path d="M696.100 739.400L684.600 747L696.100 754.700z" fill="#38bdf5"/>
<path d="M684.600 747L696.100 754.700H690z" fill="#1b86da"/>
<circle cx="693" cy="735.400" r="8" fill="#dccb9c"/>
<text x="693" y="739.600" font-size="11.500" fill="#111" text-anchor="middle">2</text>
<rect x="681.300" y="760.300" width="5.500" height="2.400" rx="1.200" fill="#8d8d86"/>
<!-- photoshop -->
<rect x="717.700" y="733.400" width="20" height="19.400" fill="#011e2c" stroke="#1cc0f2" stroke-width="1.500"/>
<text x="727.700" y="748.200" font-size="13" fill="#2fc3f4" text-anchor="middle" textLength="13.500" lengthAdjust="spacingAndGlyphs">Ps</text>
<!-- office new -->
<path d="M772.600 733L779.600 734.800V751.900L772.600 754.700z" fill="url(#ofr)"/>
<path d="M772.600 733L763.400 738.300L763 749.100L766.600 748L767.400 739.600L772.600 736.600z" fill="url(#ofl)"/>
<path d="M765.800 749.600L772.600 754.700V749.600L769 748.200z" fill="#cf1f3a"/>
<!-- opera -->
<ellipse cx="815.900" cy="743.800" rx="11.300" ry="11.200" fill="url(#op)"/>
<ellipse cx="816.300" cy="743.600" rx="6.300" ry="8.700" fill="#2a2715"/>
<!-- spotify -->
<circle cx="860" cy="743.700" r="12" fill="#1ed760"/>
<path d="M852.500 739.500c5-1.500 10.500-1 15 1.500" stroke="#111" stroke-width="2.300" fill="none" stroke-linecap="round"/>
<path d="M853.300 743.800c4.300-1.200 8.800-0.700 12.700 1.400" stroke="#111" stroke-width="2" fill="none" stroke-linecap="round"/>
<path d="M854.200 747.800c3.500-0.900 7-0.500 10 1.200" stroke="#111" stroke-width="1.700" fill="none" stroke-linecap="round"/>
<rect x="857.200" y="760.300" width="5.500" height="2.400" rx="1.200" fill="#8d8d86"/>
<!-- office old -->
<path d="M895 738l11-5 6.200 1.800v18.400l-6.200 1.800-11-4.200 11 1.400v-15l-7 1.700v10.300l-4 1.600z" fill="#eb3c00"/>
<rect x="901" y="760.300" width="5.500" height="2.400" rx="1.200" fill="#8d8d86"/>
<!-- word -->
<rect x="941" y="732.500" width="19" height="22" rx="1.500" fill="#2b7cd3"/>
<rect x="941" y="738" width="19" height="5.500" fill="#1d62b8"/><rect x="941" y="743.500" width="19" height="5.500" fill="#154c9a"/><path d="M941 749h19v4a1.500 1.500 0 0 1-1.500 1.500h-17.500z" fill="#0f3c80"/>
<rect x="935.700" y="737" width="12" height="13" rx="1.200" fill="#1756b0"/>
<text x="941.700" y="747.500" font-size="10" font-weight="bold" fill="#fff" text-anchor="middle">W</text>
<rect x="945" y="760.300" width="5.500" height="2.400" rx="1.200" fill="#8d8d86"/>
<!-- tray -->
<path d="M1072.800 746.500l5.500-5.500 5.500 5.500" stroke="#fff" stroke-width="1.400" fill="none"/>
<path d="M1096.500 749.500a3 3 0 0 1 0.300-6a4.500 4.500 0 0 1 8.500-0.800a3.400 3.400 0 0 1 1.500 6.500z" fill="#cfcfcf"/>
<circle cx="1106.300" cy="747.200" r="4.400" fill="#e81123"/>
<path d="M1104.500 745.400l3.600 3.600M1108.100 745.400l-3.600 3.600" stroke="#fff" stroke-width="1.200"/>
<text x="1150.800" y="748.700" font-size="12" fill="#fff" textLength="19" lengthAdjust="spacingAndGlyphs">ESP</text>
<!-- wifi -->
<g fill="none" stroke="#fff" stroke-width="1.400" stroke-linecap="round"><path d="M1190.500 742.500a11 11 0 0 1 15 0"/><path d="M1193 745.200a7.300 7.300 0 0 1 10 0"/><path d="M1195.500 747.700a3.700 3.700 0 0 1 5 0"/></g>
<circle cx="1198" cy="749.300" r="1.100" fill="#fff"/>
<!-- volume -->
<path d="M1214.300 742v5h2.700l3.800 3.300v-11.600l-3.800 3.300z" fill="none" stroke="#fff" stroke-width="1.200" stroke-linejoin="round"/>
<path d="M1223 741.500a4 4 0 0 1 0 6" stroke="#fff" stroke-width="1.200" fill="none" stroke-linecap="round"/>
<path d="M1225.300 739.300a7 7 0 0 1 0 10.400" stroke="#9a9a92" stroke-width="1.200" fill="none" stroke-linecap="round"/>
<!-- battery -->
<rect x="1238.800" y="740.500" width="13" height="8" rx="2" fill="none" stroke="#fff" stroke-width="1.200"/>
<rect x="1240.600" y="742.300" width="6.500" height="4.400" rx="0.800" fill="#fff"/>
<path d="M1252.800 743v3" stroke="#fff" stroke-width="1.600" stroke-linecap="round"/>
<text x="1322.200" y="739.600" font-size="12" fill="#fff" text-anchor="end" textLength="26.800" lengthAdjust="spacingAndGlyphs">14:56</text>
<text x="1322.200" y="756" font-size="12" fill="#fff" text-anchor="end" textLength="53.500" lengthAdjust="spacing">17/6/2022</text>
<circle cx="1338" cy="744.500" r="8" fill="#dccb9c"/>
<text x="1338" y="748.500" font-size="11" fill="#111" text-anchor="middle">2</text>
</svg>

</body>
</html>
